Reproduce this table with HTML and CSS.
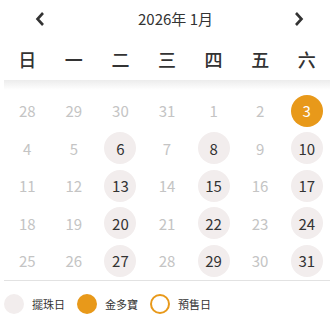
FILE: index.html
```html
<!DOCTYPE html>
<html lang="zh-Hant">
<head>
<meta charset="utf-8">
<link rel="stylesheet" href="styles.css">
</head>
<body>
<div class="cal">
  <div class="header">
    <span class="nav prev"><svg width="10" height="16" viewBox="0 0 10 16"><polyline points="8,2 2.5,8 8,14" fill="none" stroke="#333" stroke-width="2.6"/></svg></span>
    <span class="title">2026年 1月</span>
    <span class="nav next"><svg width="10" height="16" viewBox="0 0 10 16"><polyline points="2,2 7.5,8 2,14" fill="none" stroke="#333" stroke-width="2.6"/></svg></span>
  </div>
  <div class="weekdays">
    <span>日</span><span>一</span><span>二</span><span>三</span><span>四</span><span>五</span><span>六</span>
  </div>
  <div class="shade"></div>
  <div class="days">
    <span class="d off">28</span><span class="d off">29</span><span class="d off">30</span><span class="d off">31</span><span class="d off">1</span><span class="d off">2</span><span class="d gold">3</span>
    <span class="d off">4</span><span class="d off">5</span><span class="d bead">6</span><span class="d off">7</span><span class="d bead">8</span><span class="d off">9</span><span class="d bead">10</span>
    <span class="d off">11</span><span class="d off">12</span><span class="d bead">13</span><span class="d off">14</span><span class="d bead">15</span><span class="d off">16</span><span class="d bead">17</span>
    <span class="d off">18</span><span class="d off">19</span><span class="d bead">20</span><span class="d off">21</span><span class="d bead">22</span><span class="d off">23</span><span class="d bead">24</span>
    <span class="d off">25</span><span class="d off">26</span><span class="d bead">27</span><span class="d off">28</span><span class="d bead">29</span><span class="d off">30</span><span class="d bead">31</span>
  </div>
  <div class="legend">
    <span class="dot dot-bead"></span><span class="label">擺珠日</span>
    <span class="dot dot-gold"></span><span class="label">金多寶</span>
    <span class="dot dot-pre"></span><span class="label">預售日</span>
  </div>
</div>
</body>
</html>
```
FILE: styles.css
```css
html, body {
  margin: 0;
  padding: 0;
  background: #fff;
}
body {
  font-family: "Noto Sans CJK TC", "Noto Sans", sans-serif;
  color: #333;
}
.cal {
  width: 326px;
  padding: 0 2px 0 4px;
}
.header {
  height: 38px;
  display: flex;
  align-items: center;
  padding: 0 26px 0 31px;
}
.nav {
  width: 10px;
  height: 16px;
  display: flex;
}
.title {
  flex: 1;
  text-align: center;
  font-size: 15px;
  padding-left: 12px;
  line-height: 20px;
}
.weekdays {
  height: 42px;
  display: grid;
  grid-template-columns: repeat(7, 1fr);
  align-items: center;
  font-size: 18px;
  font-weight: 500;
  text-align: center;
}
.shade {
  height: 10px;
  margin-bottom: 2px;
  background: linear-gradient(to bottom, #ececec, #fff);
}
.days {
  display: grid;
  grid-template-columns: repeat(7, 1fr);
  grid-auto-rows: 37.5px;
  align-items: center;
  justify-items: center;
}
.d {
  width: 32px;
  height: 32px;
  border-radius: 50%;
  display: flex;
  align-items: center;
  justify-content: center;
  font-size: 15px;
}
.off { color: #c4c4c4; }
.bead { background: #f2eded; color: #333; }
.gold { background: #e8991a; color: #fff; }
.legend {
  border-top: 1px solid #e2e2e2;
  padding-top: 13px;
  display: flex;
  align-items: center;
}
.dot {
  width: 20px;
  height: 20px;
  border-radius: 50%;
  box-sizing: border-box;
  margin-right: 8px;
}
.dot-bead { background: #f2eded; }
.dot-gold { background: #e8991a; }
.dot-pre { border: 2px solid #e8991a; }
.label {
  font-size: 11px;
  margin-right: 12px;
  line-height: 20px;
}
```
